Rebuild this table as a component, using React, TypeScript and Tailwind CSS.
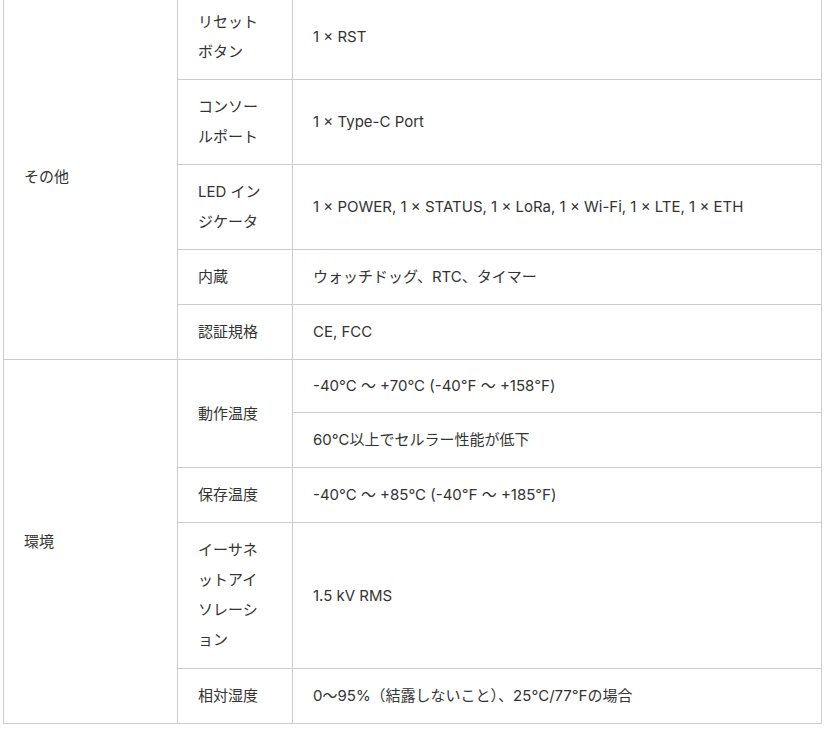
const font = { fontFamily: '"Inter", "Noto Sans CJK JP", sans-serif' };

const td = "border border-[#cccccc] px-5 py-3 align-middle";

export default function App() {
  return (
    <div className="bg-white w-[828px] h-[735px] overflow-hidden" style={font}>
      <table className="-mt-[6px] ml-[3px] w-[819px] border-collapse text-[15px] leading-[30px] text-[#333333] table-fixed">
        <colgroup>
          <col className="w-[174px]" />
          <col className="w-[115px]" />
          <col />
        </colgroup>
        <tbody>
          <tr>
            <td className={td} rowSpan={5}>その他</td>
            <td className={td}>リセットボタン</td>
            <td className={td}>1 × RST</td>
          </tr>
          <tr>
            <td className={td}>コンソールポート</td>
            <td className={td}>1 × Type-C Port</td>
          </tr>
          <tr>
            <td className={td}>LED インジケータ</td>
            <td className={td}>1 × POWER, 1 × STATUS, 1 × LoRa, 1 × Wi-Fi, 1 × LTE, 1 × ETH</td>
          </tr>
          <tr>
            <td className={td}>内蔵</td>
            <td className={td}>ウォッチドッグ、RTC、タイマー</td>
          </tr>
          <tr>
            <td className={td}>認証規格</td>
            <td className={td}>CE, FCC</td>
          </tr>
          <tr>
            <td className={td} rowSpan={6}>環境</td>
            <td className={td} rowSpan={2}>動作温度</td>
            <td className={`${td} py-[11px]`}>-40°C ～ +70°C (-40℉ ～ +158℉)</td>
          </tr>
          <tr>
            <td className={td}>60℃以上でセルラー性能が低下</td>
          </tr>
          <tr>
            <td className={td}>保存温度</td>
            <td className={td}>-40°C ～ +85°C (-40℉ ～ +185℉)</td>
          </tr>
          <tr>
            <td className={`${td} pb-[13px]`}>イーサネットアイソレーション</td>
            <td className={td}>1.5 kV RMS</td>
          </tr>
          <tr>
            <td className={td}>相対湿度</td>
            <td className={td}>0～95%（結露しないこと）、25°C/77℉の場合</td>
          </tr>
        </tbody>
      </table>
    </div>
  );
}
